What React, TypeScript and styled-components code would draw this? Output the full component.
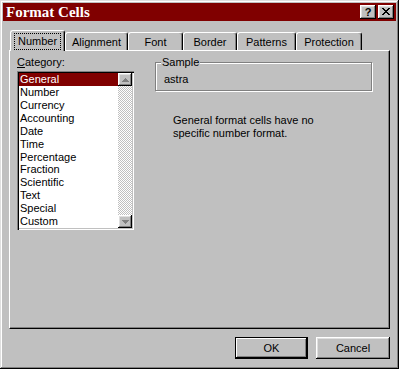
import React from 'react'
import styled, { createGlobalStyle, css } from 'styled-components'

const GlobalStyle = createGlobalStyle`
  html, body { margin: 0; padding: 0; background: #c0c0c0; }
  body {
    font-family: "Liberation Sans", Arial, sans-serif;
    font-size: 11px;
    color: #000;
  }
  * { box-sizing: border-box; }
`

const raised = css`
  box-shadow: inset -1px -1px #000, inset 1px 1px #fff, inset -2px -2px #808080, inset 2px 2px #dfdfdf;
`

const Window = styled.div`
  width: 399px;
  height: 369px;
  padding: 3px;
  background: #c0c0c0;
  box-shadow: inset -1px -1px #000, inset 1px 1px #dfdfdf, inset -2px -2px #808080, inset 2px 2px #fff;
  display: flex;
  flex-direction: column;
`

const TitleBar = styled.div`
  height: 18px;
  background: #800000;
  display: flex;
  align-items: center;
  padding: 0 2px 0 3px;
`

const Title = styled.div`
  flex: 1;
  font-family: "Liberation Serif", "Times New Roman", serif;
  font-weight: bold;
  font-size: 15px;
  line-height: 18px;
  color: #fff;
`

const TitleButton = styled.div`
  width: 16px;
  height: 14px;
  margin-left: 2px;
  background: #c0c0c0;
  ${raised};
  display: flex;
  align-items: center;
  justify-content: center;
  font-weight: bold;
  font-size: 11px;
  line-height: 14px;
  padding-bottom: 1px;
`

const Body = styled.div`
  flex: 1;
  padding: 0 6px;
  display: flex;
  flex-direction: column;
`

const TabRow = styled.div`
  margin-top: 9px;
  padding-left: 1px;
  height: 20px;
  display: flex;
  align-items: flex-end;
  position: relative;
  z-index: 1;
`

const Tab = styled.div<{ $w: number; $active?: boolean }>`
  width: ${p => p.$w}px;
  height: ${p => (p.$active ? 21 : 18)}px;
  margin-bottom: ${p => (p.$active ? -1 : 0)}px;
  background: #c0c0c0;
  border-top: 1px solid #fff;
  border-left: 1px solid #fff;
  border-right: 1px solid #000;
  border-radius: 3px 3px 0 0;
  box-shadow: inset -1px 0 #808080;
  display: flex;
  align-items: center;
  justify-content: center;
  padding-top: ${p => (p.$active ? 0 : 1)}px;
  line-height: 13px;
`

const FocusLabel = styled.span`
  outline: 1px dotted #000;
  outline-offset: 0;
  padding: 1px 3px;
`

const Panel = styled.div`
  height: 279px;
  border: 1px solid;
  border-color: #fff #000 #000 #fff;
  box-shadow: inset -1px -1px #808080;
  padding: 5px 7px;
  display: flex;
  gap: 21px;
`

const LeftCol = styled.div`
  width: 117px;
  display: flex;
  flex-direction: column;
`

const Label = styled.div`
  line-height: 13px;
  margin-bottom: 2px;
  u { text-decoration: underline; text-underline-offset: 1px; }
`

const ListBox = styled.div`
  width: 117px;
  height: 159px;
  background: #fff;
  padding: 2px;
  box-shadow: inset 1px 1px #808080, inset 2px 2px #000, inset -1px -1px #fff, inset -2px -2px #c0c0c0;
  display: flex;
`

const Items = styled.div`
  flex: 1;
  display: flex;
  flex-direction: column;
`

const Item = styled.div<{ $selected?: boolean }>`
  height: 13px;
  line-height: 13px;
  padding-left: 1px;
  white-space: nowrap;
  overflow: hidden;
  background: ${p => (p.$selected ? '#800000' : 'transparent')};
  color: ${p => (p.$selected ? '#fff' : '#000')};
`

const ScrollBar = styled.div`
  width: 14px;
  display: flex;
  flex-direction: column;
`

const ScrollButton = styled.div`
  height: 13px;
  background: #c0c0c0;
  ${raised};
  display: flex;
  align-items: center;
  justify-content: center;
`

const Track = styled.div`
  flex: 1;
  background: repeating-conic-gradient(#fff 0 25%, #c0c0c0 0 50%) 0 0 / 2px 2px;
`

const RightCol = styled.div`
  flex: 1;
  display: flex;
  flex-direction: column;
`

const Group = styled.div`
  position: relative;
  width: 217px;
  height: 29px;
  margin-top: 6px;
  border: 1px solid #808080;
  box-shadow: inset 1px 1px #fff, 1px 1px #fff;
  padding: 10px 0 0 8px;
  line-height: 13px;
`

const Legend = styled.span`
  position: absolute;
  top: -7px;
  left: 5px;
  padding: 0 1px;
  background: #c0c0c0;
  line-height: 13px;
`

const Description = styled.div`
  margin-top: 23px;
  padding-left: 18px;
  line-height: 13px;
`

const Footer = styled.div`
  margin-top: 8px;
  display: flex;
  justify-content: flex-end;
  gap: 8px;
`

const Button = styled.div<{ $w: number; $default?: boolean }>`
  width: ${p => p.$w}px;
  height: 22px;
  background: #c0c0c0;
  display: flex;
  align-items: center;
  justify-content: center;
  line-height: 13px;
  ${p =>
    p.$default
      ? css`
          border: 1px solid #000;
          box-shadow: inset -1px -1px #000, inset 1px 1px #fff, inset -2px -2px #808080;
        `
      : raised};
`

const Arrow = ({ down }: { down?: boolean }) => (
  <svg width="7" height="4" viewBox="0 0 7 4" style={{ transform: down ? 'rotate(180deg)' : undefined }}>
    <path d="M3 0h1v1h1v1h1v1h1v1H0V3h1V2h1V1h1z" fill="#808080" />
  </svg>
)

const CloseGlyph = () => (
  <svg width="8" height="7" viewBox="0 0 8 7">
    <path
      d="M0 0h2v1h1v1h2V1h1V0h2v1H7v1H6v1H5v1h1v1h1v1h1v1H6V6H5V5H3v1H2v1H0V6h1V5h1V4h1V3H2V2H1V1H0z"
      fill="#000"
    />
  </svg>
)

const categories = [
  'General',
  'Number',
  'Currency',
  'Accounting',
  'Date',
  'Time',
  'Percentage',
  'Fraction',
  'Scientific',
  'Text',
  'Special',
  'Custom',
]

const tabs: [string, number][] = [
  ['Number', 55],
  ['Alignment', 63],
  ['Font', 55],
  ['Border', 54],
  ['Patterns', 59],
  ['Protection', 66],
]

export default function App() {
  return (
    <>
      <GlobalStyle />
      <Window>
        <TitleBar>
          <Title>Format Cells</Title>
          <TitleButton>?</TitleButton>
          <TitleButton>
            <CloseGlyph />
          </TitleButton>
        </TitleBar>
        <Body>
          <TabRow>
            {tabs.map(([name, w], i) => (
              <Tab key={name} $w={w} $active={i === 0}>
                {i === 0 ? <FocusLabel>{name}</FocusLabel> : name}
              </Tab>
            ))}
          </TabRow>
          <Panel>
            <LeftCol>
              <Label>
                <u>C</u>ategory:
              </Label>
              <ListBox>
                <Items>
                  {categories.map((c, i) => (
                    <Item key={c} $selected={i === 0}>
                      {c}
                    </Item>
                  ))}
                </Items>
                <ScrollBar>
                  <ScrollButton>
                    <Arrow />
                  </ScrollButton>
                  <Track />
                  <ScrollButton>
                    <Arrow down />
                  </ScrollButton>
                </ScrollBar>
              </ListBox>
            </LeftCol>
            <RightCol>
              <Group>
                <Legend>Sample</Legend>
                astra
              </Group>
              <Description>
                General format cells have no
                <br />
                specific number format.
              </Description>
            </RightCol>
          </Panel>
          <Footer>
            <Button $w={73} $default>
              OK
            </Button>
            <Button $w={74}>Cancel</Button>
          </Footer>
        </Body>
      </Window>
    </>
  )
}
